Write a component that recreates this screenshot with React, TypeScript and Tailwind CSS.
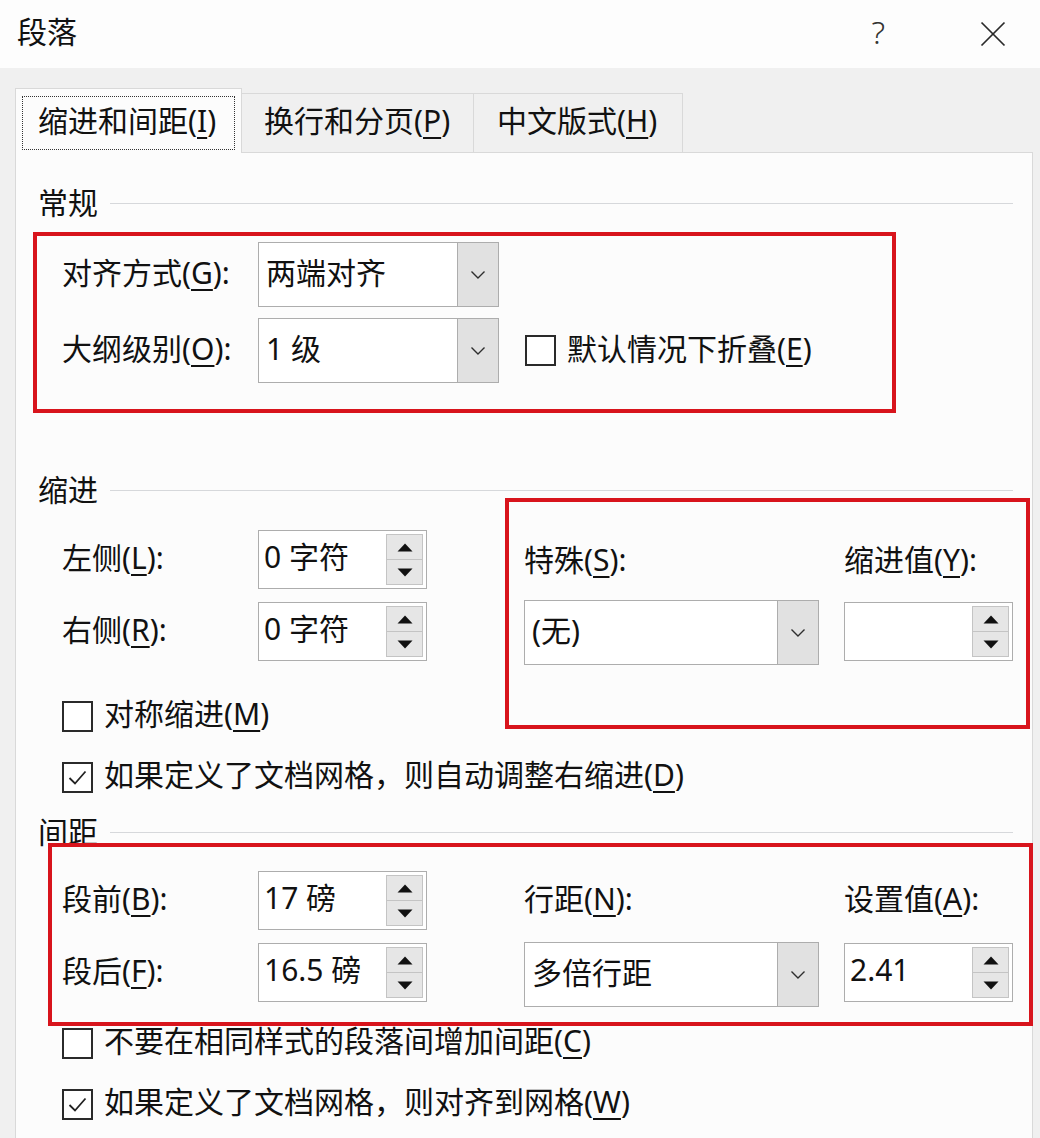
import React from "react";

const FONT = "font-['Noto_Sans','Noto_Sans_CJK_SC',sans-serif]";

function U({ c }: { c: string }) {
  return <span className="underline decoration-[1.5px] underline-offset-[5px]">{c}</span>;
}

function Label({ pre, k, post = "):", className = "" }: { pre: string; k: string; post?: string; className?: string }) {
  return (
    <span className={"text-[30px] leading-[36px] whitespace-nowrap " + className}>
      {pre}(<U c={k} />{post}
    </span>
  );
}

function Chevron() {
  return (
    <svg width="16" height="10" viewBox="0 0 16 10">
      <polyline points="1.5,1.5 8,8 14.5,1.5" fill="none" stroke="#2e2e2e" strokeWidth="1.4" />
    </svg>
  );
}

function Select({ value, w }: { value: string; w: string }) {
  return (
    <div className={"flex h-[65px] border border-[#adadad] bg-white " + w}>
      <div className="flex flex-1 items-center pl-[7px] pb-[4px] text-[30px] leading-none whitespace-nowrap">{value}</div>
      <div className="flex w-[41px] items-center justify-center border-l border-[#adadad] bg-[#e1e1e1]">
        <Chevron />
      </div>
    </div>
  );
}

function Tri({ up }: { up?: boolean }) {
  return (
    <svg width="16" height="9" viewBox="0 0 16 9">
      <polygon points={up ? "8,0.5 15.5,8.5 0.5,8.5" : "0.5,0.5 15.5,0.5 8,8.5"} fill="#111" />
    </svg>
  );
}

function Spin({ value }: { value: string }) {
  return (
    <div className="flex h-[59px] w-[169px] border border-[#adadad] bg-white">
      <div className="flex flex-1 items-center pl-[5px] pb-[6px] text-[30px] leading-none whitespace-nowrap">{value}</div>
      <div className="my-[3px] mr-[3px] flex w-[37px] flex-col">
        <div className="flex flex-1 items-center justify-center border border-[#c4c4c4] bg-[#e6e6e6]">
          <Tri up />
        </div>
        <div className="flex flex-1 items-center justify-center border border-t-0 border-[#c4c4c4] bg-[#e6e6e6]">
          <Tri />
        </div>
      </div>
    </div>
  );
}

function Check({ checked }: { checked?: boolean }) {
  return (
    <div className="flex h-[31px] w-[31px] shrink-0 items-center justify-center border-2 border-[#2a2a2a] bg-white">
      {checked && (
        <svg width="25" height="25" viewBox="0 0 25 25">
          <polyline points="4.5,13 10,18.5 20.5,6.5" fill="none" stroke="#222" strokeWidth="1.8" />
        </svg>
      )}
    </div>
  );
}

function CheckRow({ checked, text, k, className = "" }: { checked?: boolean; text: string; k: string; className?: string }) {
  return (
    <div className={"flex h-[40px] items-center gap-[11px] pl-[46px] " + className}>
      <Check checked={checked} />
      <span className="pb-[4px] text-[30px] leading-[36px] whitespace-nowrap">
        {text}(<U c={k} />)
      </span>
    </div>
  );
}

function Section({ title, className = "" }: { title: string; className?: string }) {
  return (
    <div className={"flex h-[36px] items-center pl-[22px] pr-[19px] " + className}>
      <span className="text-[30px] leading-none whitespace-nowrap">{title}</span>
      <div className="ml-[12px] h-px flex-1 bg-[#d6d8db]" />
    </div>
  );
}

export default function App() {
  return (
    <div className={"relative h-[1138px] w-[1040px] overflow-hidden bg-[#f0f0f0] text-[#111] " + FONT}>
      {/* title bar */}
      <div className="flex h-[68px] items-center bg-[#fdfdfd] pl-[17px] pr-[34px]">
        <span className="pb-[4px] text-[30px] leading-none">段落</span>
        <span className="ml-auto pb-[4px] text-[32px] font-light leading-none text-[#333]">?</span>
        <svg className="ml-[95px]" width="26" height="26" viewBox="0 0 26 26">
          <line x1="1.5" y1="1.5" x2="24.5" y2="24.5" stroke="#2a2a2a" strokeWidth="1.7" />
          <line x1="24.5" y1="1.5" x2="1.5" y2="24.5" stroke="#2a2a2a" strokeWidth="1.7" />
        </svg>
      </div>

      {/* tabs */}
      <div className="relative z-10 -mb-px flex items-end pl-[15px] pt-[20px]">
        <div className="h-[65px] w-[227px] border-l border-r border-t border-[#d9d9d9] bg-[#fcfcfc] px-[6px] pt-[7px]">
          <div className="flex h-[54px] items-center border border-dotted border-[#333] pb-[4px] pl-[15px]">
            <span className="text-[30px] leading-none whitespace-nowrap">
              缩进和间距(<U c="I" />)
            </span>
          </div>
        </div>
        <div className="flex h-[60px] w-[232px] items-center border-b border-r border-t border-[#d9d9d9] bg-[#f0f0f0] pb-[4px] pl-[22px]">
          <span className="text-[30px] leading-none whitespace-nowrap">
            换行和分页(<U c="P" />)
          </span>
        </div>
        <div className="flex h-[60px] w-[209px] items-center border-b border-r border-t border-[#d9d9d9] bg-[#f0f0f0] pb-[4px] pl-[23px]">
          <span className="text-[30px] leading-none whitespace-nowrap">
            中文版式(<U c="H" />)
          </span>
        </div>
      </div>

      {/* panel */}
      <div className="ml-[15px] h-[1000px] w-[1018px] border border-[#d9d9d9] bg-[#fcfcfc]">
        <Section title="常规" className="mt-[32px]" />
        <div className="mt-[21px] flex items-center pl-[46px]">
          <Label pre="对齐方式" k="G" className="w-[196px] pb-[4px]" />
          <Select value="两端对齐" w="w-[241px]" />
        </div>
        <div className="mt-[11px] flex items-center pl-[46px]">
          <Label pre="大纲级别" k="O" className="w-[196px] pb-[4px]" />
          <Select value="1 级" w="w-[241px]" />
          <div className="ml-[26px] flex items-center gap-[11px]">
            <Check />
            <span className="pb-[4px] text-[30px] leading-[36px] whitespace-nowrap">
              默认情况下折叠(<U c="E" />)
            </span>
          </div>
        </div>

        <Section title="缩进" className="mt-[89px]" />
        <div className="mt-[22px] flex items-start pl-[46px]">
          <div className="flex w-[462px] flex-col gap-[13px]">
            <div className="flex items-center">
              <Label pre="左侧" k="L" className="w-[196px] pb-[4px]" />
              <Spin value="0 字符" />
            </div>
            <div className="flex items-center">
              <Label pre="右侧" k="R" className="w-[196px] pb-[4px]" />
              <Spin value="0 字符" />
            </div>
          </div>
          <div className="flex gap-[25px]">
            <div className="flex w-[295px] flex-col">
              <div className="flex h-[64px] items-center pb-[4px]">
                <Label pre="特殊" k="S" />
              </div>
              <div className="mt-[6px]">
                <Select value="(无)" w="w-[295px]" />
              </div>
            </div>
            <div className="flex w-[169px] flex-col">
              <div className="flex h-[64px] items-center pb-[4px]">
                <Label pre="缩进值" k="Y" />
              </div>
              <div className="mt-[8px]">
                <Spin value="" />
              </div>
            </div>
          </div>
        </div>

        <CheckRow text="对称缩进" k="M" className="mt-[31px]" />
        <CheckRow checked text="如果定义了文档网格，则自动调整右缩进" k="D" className="mt-[21px]" />

        <Section title="间距" className="mt-[17px]" />
        <div className="mt-[21px] flex items-start pl-[46px]">
          <div className="flex w-[462px] flex-col gap-[13px]">
            <div className="flex items-center">
              <Label pre="段前" k="B" className="w-[196px] pb-[4px]" />
              <Spin value="17 磅" />
            </div>
            <div className="flex items-center">
              <Label pre="段后" k="F" className="w-[196px] pb-[4px]" />
              <Spin value="16.5 磅" />
            </div>
          </div>
          <div className="flex gap-[25px]">
            <div className="flex w-[295px] flex-col">
              <div className="flex h-[59px] items-center pb-[4px]">
                <Label pre="行距" k="N" />
              </div>
              <div className="mt-[12px]">
                <Select value="多倍行距" w="w-[295px]" />
              </div>
            </div>
            <div className="flex w-[169px] flex-col">
              <div className="flex h-[59px] items-center pb-[4px]">
                <Label pre="设置值" k="A" />
              </div>
              <div className="mt-[13px]">
                <Spin value="2.41" />
              </div>
            </div>
          </div>
        </div>

        <CheckRow text="不要在相同样式的段落间增加间距" k="C" className="mt-[16px]" />
        <CheckRow checked text="如果定义了文档网格，则对齐到网格" k="W" className="mt-[21px]" />
      </div>

      {/* red annotation boxes */}
      <div className="pointer-events-none absolute left-[33px] top-[232px] h-[181px] w-[863px] border-4 border-[#d8141c]" />
      <div className="pointer-events-none absolute left-[505px] top-[498px] h-[231px] w-[525px] border-4 border-[#d8141c]" />
      <div className="pointer-events-none absolute left-[48px] top-[843px] h-[183px] w-[985px] border-4 border-[#d8141c]" />
    </div>
  );
}
